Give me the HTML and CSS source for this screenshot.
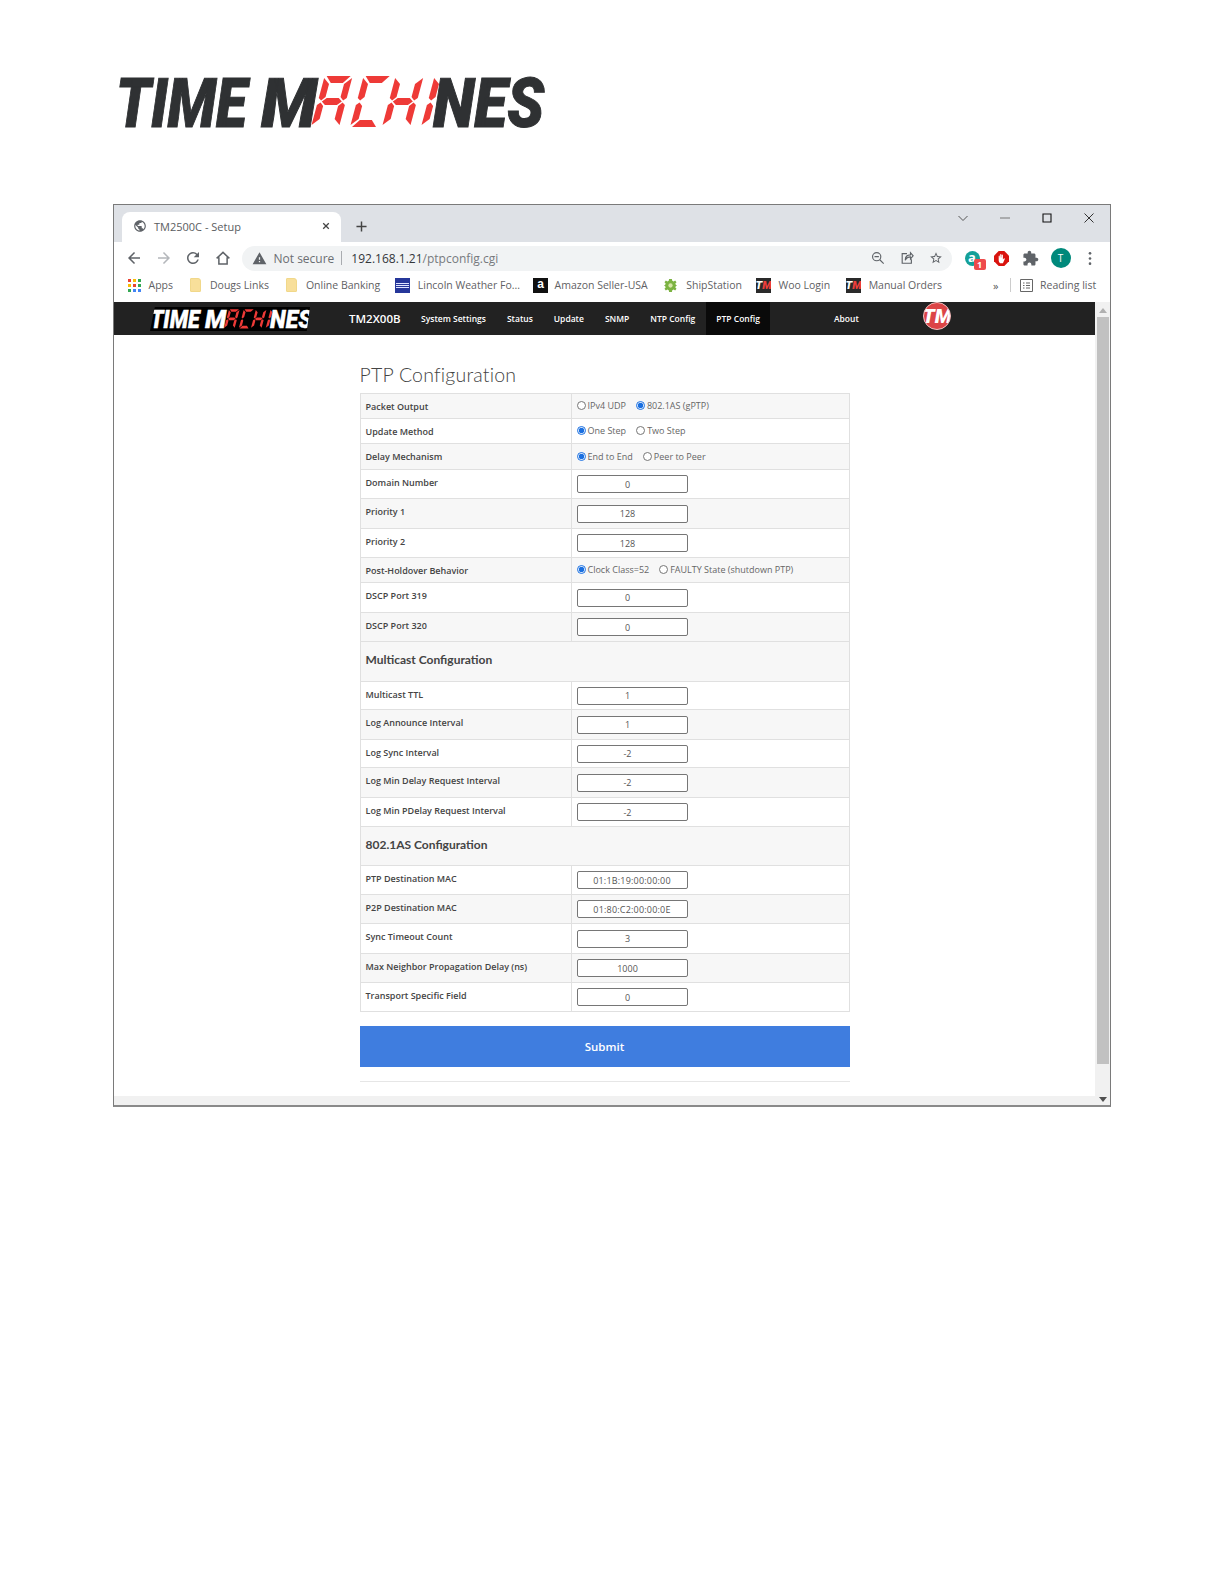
FILE: index.html
```html
<!DOCTYPE html>
<html lang="en">
<head>
<meta charset="utf-8">
<title>Time Machines - PTP Configuration</title>
<link rel="stylesheet" href="styles.css">
</head>
<body>
<svg class="defs" width="0" height="0" aria-hidden="true">
  <defs>
    <polygon id="s-top" points="2,-51 26,-51 20,-44 8,-44"/>
    <polygon id="s-ul" points="0,-49 6.5,-43 6.5,-30 3,-26.500 0,-29"/>
    <polygon id="s-ur" points="28,-49 21.5,-43 21.5,-30 25,-26.500 28,-29"/>
    <polygon id="s-mid" points="4,-25.500 8,-29 20,-29 24,-25.500 20,-22 8,-22"/>
    <polygon id="s-ll" points="0,-22 3,-24.500 6.5,-21 6.5,-8 0,-2"/>
    <polygon id="s-lr" points="28,-22 25,-24.500 21.5,-21 21.5,-8 28,-2"/>
    <polygon id="s-bot" points="2,0 8,-7 20,-7 26,0"/>
    <symbol id="tm-logo" viewBox="113 72 436 60">
      <text class="logo-word" x="116" y="127" textLength="131" lengthAdjust="spacingAndGlyphs">TIME</text>
      <text class="logo-word" x="261" y="127" textLength="56" lengthAdjust="spacingAndGlyphs">M</text>
      <text class="logo-word" x="433" y="127" textLength="111" lengthAdjust="spacingAndGlyphs">NES</text>
      <g class="logo-seg">
        <g transform="translate(311 127) skewX(-15)">
          <use href="#s-top"/><use href="#s-ul"/><use href="#s-ur"/><use href="#s-mid"/><use href="#s-ll"/><use href="#s-lr"/>
        </g>
        <g transform="translate(350 127) skewX(-15)">
          <use href="#s-top"/><use href="#s-ul"/><use href="#s-ll"/><use href="#s-bot"/>
        </g>
        <g transform="translate(382 127) skewX(-15)">
          <use href="#s-ul"/><use href="#s-ur"/><use href="#s-mid"/><use href="#s-ll"/><use href="#s-lr"/>
        </g>
        <g transform="translate(421 127) skewX(-15)">
          <use href="#s-ul"/><use href="#s-ll"/>
        </g>
      </g>
    </symbol>
  </defs>
</svg>

<header class="brand">
  <svg class="brand-logo" role="img" aria-label="Time Machines"><use href="#tm-logo"/></svg>
</header>

<div class="window">
  <div class="tabstrip">
    <div class="tab">
      <svg class="globe" viewBox="0 0 24 24"><path d="M12 2C6.48 2 2 6.48 2 12s4.48 10 10 10 10-4.48 10-10S17.52 2 12 2zm-1 17.93c-3.95-.49-7-3.85-7-7.93 0-.62.08-1.21.21-1.79L9 15v1c0 1.1.9 2 2 2v1.93zm6.9-2.54c-.26-.81-1-1.39-1.9-1.39h-1v-3c0-.55-.45-1-1-1H8v-2h2c.55 0 1-.45 1-1V7h2c1.1 0 2-.9 2-2v-.41c2.93 1.19 5 4.06 5 7.41 0 2.08-.8 3.97-2.1 5.39z"/></svg>
      <span class="tab-title">TM2500C - Setup</span>
      <svg class="tab-x" viewBox="0 0 10 10"><path d="M1.5 1.5l7 7M8.5 1.5l-7 7"/></svg>
    </div>
    <svg class="tab-plus" viewBox="0 0 12 12"><path d="M6 .5v11M.5 6h11"/></svg>
    <div class="winctl">
      <svg class="wc wc-chev" viewBox="0 0 12 12"><path d="M1.500 4l4.500 4.500L10.500 4"/></svg>
      <svg class="wc wc-min" viewBox="0 0 12 12"><path d="M1 6h10"/></svg>
      <svg class="wc wc-max" viewBox="0 0 12 12"><path d="M2 2h8v8H2z"/></svg>
      <svg class="wc wc-close" viewBox="0 0 12 12"><path d="M1.5 1.5l9 9M10.5 1.5l-9 9"/></svg>
    </div>
  </div>

  <div class="toolbar">
    <svg class="nav-ic" viewBox="0 0 24 24"><path d="M20 11H7.83l5.59-5.59L12 4l-8 8 8 8 1.41-1.41L7.83 13H20v-2z"/></svg>
    <svg class="nav-ic nav-off" viewBox="0 0 24 24"><path d="M12 4l-1.41 1.41L16.17 11H4v2h12.17l-5.58 5.59L12 20l8-8z"/></svg>
    <svg class="nav-ic" viewBox="0 0 24 24"><path d="M17.65 6.35A7.958 7.958 0 0012 4c-4.42 0-7.99 3.58-7.99 8s3.57 8 7.99 8c3.73 0 6.84-2.55 7.73-6h-2.08A5.99 5.99 0 0112 18c-3.31 0-6-2.69-6-6s2.69-6 6-6c1.66 0 3.14.69 4.22 1.78L13 11h7V4l-2.35 2.35z"/></svg>
    <svg class="nav-ic home" viewBox="0 0 24 24"><path d="M3.5 12.5L12 4.5l8.5 8M6.5 11v9h11v-9"/></svg>
    <div class="omnibox">
      <svg class="warn" viewBox="0 0 24 24"><path d="M1 21h22L12 2 1 21zm12-3h-2v-2h2v2zm0-4h-2v-4h2v4z"/></svg>
      <span class="not-secure">Not secure</span>
      <span class="omni-sep"></span>
      <span class="url">192.168.1.21<span class="url-path">/ptpconfig.cgi</span></span>
      <span class="omni-right">
        <svg class="omni-ic" viewBox="0 0 16 16"><circle cx="6.5" cy="6.5" r="4.7"/><path d="M10 10l4.5 4.5M4 6.5h5"/></svg>
        <svg class="omni-ic" viewBox="0 0 16 16"><path d="M8 3H2.5v11h10.5V9.5M6 10.5c0-4 2.500-6 6-6V2l3 3.500-3 3.500V6.700c-2.800 0-4.800 1.300-6 3.800z"/></svg>
        <svg class="omni-ic omni-star" viewBox="0 0 24 24"><path d="M22 9.240l-7.190-.62L12 2 9.190 8.630 2 9.240l5.460 4.730L5.820 21 12 17.270 18.180 21l-1.630-7.030L22 9.240zM12 15.400l-3.760 2.270 1-4.280-3.320-2.880 4.380-.38L12 6.100l1.710 4.040 4.380.38-3.320 2.880 1 4.280L12 15.400z"/></svg>
      </span>
    </div>
    <div class="exts">
      <span class="ext-a">a<span class="ext-badge">1</span></span>
      <svg class="ext-stop" viewBox="0 0 16 16"><path class="stop-bg" d="M5 0h6l5 5v6l-5 5H5l-5-5V5z"/><path class="stop-hand" d="M5 5.500c0-1 1.200-1 1.200 0V7h.4V4c0-1 1.300-1 1.300 0v3h.3V4.500c0-1 1.300-1 1.300 0V9l.9-1c.7-.6 1.500.1 1 .8L9.500 13H6.500C5.500 12 5 11 5 10z"/></svg>
      <svg class="ext-puzzle" viewBox="0 0 24 24"><path d="M20.500 11H19V7c0-1.100-.9-2-2-2h-4V3.500C13 2.120 11.880 1 10.500 1S8 2.120 8 3.500V5H4c-1.100 0-1.990.9-1.990 2v3.800H3.500c1.490 0 2.700 1.210 2.700 2.700s-1.210 2.700-2.700 2.700H2V20c0 1.100.9 2 2 2h3.800v-1.500c0-1.490 1.210-2.700 2.700-2.700 1.490 0 2.700 1.210 2.700 2.700V22H17c1.100 0 2-.9 2-2v-4h1.500c1.380 0 2.500-1.120 2.500-2.500S21.880 11 20.500 11z"/></svg>
      <span class="avatar">T</span>
      <svg class="kebab" viewBox="0 0 4 16"><circle cx="2" cy="2.500" r="1.400"/><circle cx="2" cy="8" r="1.400"/><circle cx="2" cy="13.500" r="1.400"/></svg>
    </div>
  </div>

  <div class="bookmarks">
    <span class="bm">
      <svg class="bm-ic" viewBox="0 0 13 13"><g class="d-r"><rect width="3" height="3"/><rect x="5" y="5" width="3" height="3"/></g><g class="d-y"><rect x="5" width="3" height="3"/><rect y="5" width="3" height="3"/></g><g class="d-g"><rect x="10" width="3" height="3"/><rect x="10" y="5" width="3" height="3"/><rect y="10" width="3" height="3"/></g><g class="d-b"><rect x="5" y="10" width="3" height="3"/><rect x="10" y="10" width="3" height="3"/></g></svg>
      Apps
    </span>
    <span class="bm"><span class="folder"></span>Dougs Links</span>
    <span class="bm"><span class="folder"></span>Online Banking</span>
    <span class="bm"><span class="wx"><i></i><i></i><i></i></span>Lincoln Weather Fo...</span>
    <span class="bm"><span class="amz">a</span>Amazon Seller-USA</span>
    <span class="bm">
      <svg class="bm-ic gear-ic" viewBox="0 0 14 14"><path class="gear" d="M5.500 0h3l.4 2 1.500.6L12 1.500 13.500 3.500l-1.300 1.300.5 1.500L14 7l-1.300.7-.5 1.500 1.300 1.300L12 12.500l-1.600-1.100-1.500.6-.4 2h-3l-.4-2-1.500-.6L2 12.500.5 10.500l1.300-1.300-.5-1.500L0 7l1.300-.7.5-1.500L.5 3.500 2 1.500l1.600 1.100L5.100 2z"/><circle class="gear-eye" cx="7" cy="7" r="2.300"/></svg>
      ShipStation
    </span>
    <span class="bm"><span class="tmfav tmfav-first"><b>T</b><em>M</em></span>Woo Login</span>
    <span class="bm"><span class="tmfav"><b>T</b><em>M</em></span>Manual Orders</span>
    <span class="bm-more">»</span>
    <span class="bm-sep"></span>
    <span class="bm bm-read">
      <svg class="bm-ic read-ic" viewBox="0 0 13 13"><path d="M.5.500h12v12H.5zM3 4h1.500M6 4h4M3 6.500h1.500M6 6.500h4M3 9h1.500M6 9h4"/></svg>
      Reading list
    </span>
  </div>

  <div class="viewport">
    <div class="site">
      <nav class="topnav">
        <span class="nav-logo"><svg role="img" aria-label="Time Machines"><use href="#tm-logo"/></svg></span>
        <a class="nav-model">TM2X00B</a>
        <a class="nav-link">System Settings</a>
        <a class="nav-link">Status</a>
        <a class="nav-link">Update</a>
        <a class="nav-link">SNMP</a>
        <a class="nav-link">NTP Config</a>
        <a class="nav-link nav-active">PTP Config</a>
        <a class="nav-link nav-about">About</a>
        <span class="nav-badge"><b>T</b><em>M</em></span>
      </nav>

      <main class="content">
        <h1>PTP Configuration</h1>
        <form class="cfg">
          <table>
            <tr class="alt h25"><th>Packet Output</th><td class="opts"><label><input type="radio" name="a">IPv4 UDP</label><label><input type="radio" name="a" checked>802.1AS (gPTP)</label></td></tr>
            <tr class="h25"><th class="mid">Update Method</th><td class="opts"><label><input type="radio" name="b" checked>One Step</label><label><input type="radio" name="b">Two Step</label></td></tr>
            <tr class="alt h26"><th class="mid">Delay Mechanism</th><td class="opts"><label><input type="radio" name="c" checked>End to End</label><label><input type="radio" name="c">Peer to Peer</label></td></tr>
            <tr class="h29"><th>Domain Number</th><td><input class="field" value="0"></td></tr>
            <tr class="alt h30"><th>Priority 1</th><td><input class="field" value="128"></td></tr>
            <tr class="h29"><th>Priority 2</th><td><input class="field" value="128"></td></tr>
            <tr class="alt h25"><th class="mid">Post-Holdover Behavior</th><td class="opts"><label><input type="radio" name="d" checked>Clock Class=52</label><label><input type="radio" name="d">FAULTY State (shutdown PTP)</label></td></tr>
            <tr class="h30"><th>DSCP Port 319</th><td><input class="field" value="0"></td></tr>
            <tr class="alt h29"><th>DSCP Port 320</th><td><input class="field" value="0"></td></tr>
            <tr class="alt h40 section"><th colspan="2">Multicast Configuration</th></tr>
            <tr class="h28"><th>Multicast TTL</th><td><input class="field" value="1"></td></tr>
            <tr class="alt h30"><th>Log Announce Interval</th><td><input class="field" value="1"></td></tr>
            <tr class="h28"><th>Log Sync Interval</th><td><input class="field" value="-2"></td></tr>
            <tr class="alt h30"><th>Log Min Delay Request Interval</th><td><input class="field" value="-2"></td></tr>
            <tr class="h29"><th>Log Min PDelay Request Interval</th><td><input class="field" value="-2"></td></tr>
            <tr class="alt h39 section"><th colspan="2">802.1AS Configuration</th></tr>
            <tr class="h29"><th>PTP Destination MAC</th><td><input class="field field-mac" value="01:1B:19:00:00:00"></td></tr>
            <tr class="alt h29"><th>P2P Destination MAC</th><td><input class="field field-mac" value="01:80:C2:00:00:0E"></td></tr>
            <tr class="h30"><th>Sync Timeout Count</th><td><input class="field" value="3"></td></tr>
            <tr class="alt h29"><th>Max Neighbor Propagation Delay (ns)</th><td><input class="field" value="1000"></td></tr>
            <tr class="h29"><th>Transport Specific Field</th><td><input class="field" value="0"></td></tr>
          </table>
          <button type="button" class="submit">Submit</button>
        </form>
        <hr>
      </main>
      <div class="hbar"></div>
    </div>
    <div class="scrollbar">
      <span class="arrow-up"></span>
      <span class="thumb"></span>
      <span class="arrow-down"></span>
    </div>
  </div>
</div>
</body>
</html>
```

FILE: styles.css
```css
* { box-sizing: border-box; }
html, body { margin: 0; padding: 0; background: #fff; }
body { font-family: "Open Sans", "Liberation Sans", sans-serif; color: #333; height: 1584px; overflow: hidden; }
.defs { position: absolute; }

.brand { height: 204px; padding: 72px 0 0 113px; }
.brand-logo { display: block; width: 436px; height: 60px; color: #2f3133; }
.logo-word { font-family: Roboto, "Liberation Sans", sans-serif; font-weight: 900; font-style: italic; font-size: 69px; fill: currentColor; stroke: currentColor; stroke-width: 1px; }
.logo-seg { fill: #ee3a37; }

.window { margin-left: 113px; width: 998px; height: 903px; border: 1px solid #7a7a7a; border-bottom-width: 2px; border-bottom-color: #8a8a8a; overflow: hidden; background: #fff; }

.tabstrip { height: 37px; background: #dee1e6; display: flex; align-items: flex-end; padding-left: 8px; position: relative; }
.tab { width: 219px; height: 30px; background: #fff; border-radius: 8px 8px 0 0; display: flex; align-items: center; padding: 0 0 2px 11px; }
.globe { width: 14px; height: 14px; fill: #5f6368; flex: none; }
.tab-title { font-size: 11px; color: #5a5d61; margin-left: 7px; flex: 1; }
.tab-x { width: 8px; height: 8px; stroke: #444; stroke-width: 1.6; fill: none; margin-right: 11px; }
.tab-plus { width: 11px; height: 11px; stroke: #444; stroke-width: 1.6; fill: none; margin: 0 0 10px 15px; }
.winctl { position: absolute; top: 7px; right: 15px; display: flex; gap: 30px; }
.wc { width: 12px; height: 12px; fill: none; stroke: #333; stroke-width: 1; display: block; }
.wc-chev { stroke: #555; }
.wc-min { stroke: #777; }
.wc-max { stroke: #111; stroke-width: 1.1; }

.toolbar { height: 30px; background: #fff; display: flex; align-items: center; padding-left: 11px; padding-top: 2px; }
.nav-ic { width: 18px; height: 18px; fill: #5f6368; flex: none; margin-right: 11.500px; }
.nav-off { fill: #b4b7bb; }
.home { fill: none; stroke: #5f6368; stroke-width: 2; margin-right: 4px; }
.omnibox { width: 710px; height: 25px; border-radius: 13px; background: #f1f3f4; display: flex; align-items: center; padding-left: 10px; margin-left: 6px; flex: none; }
.warn { width: 15px; height: 15px; fill: #5f6368; flex: none; }
.not-secure { font-size: 12px; color: #6b6e72; margin-left: 7px; }
.omni-sep { width: 1px; height: 14px; background: #a9acb0; margin: 0 9px 0 7px; }
.url { font-size: 12px; color: #33363a; }
.url-path { color: #777a7e; }
.omni-right { margin-left: auto; display: flex; align-items: center; gap: 15px; padding-right: 9px; }
.omni-ic { width: 14px; height: 14px; fill: none; stroke: #5f6368; stroke-width: 1.300; display: block; }
.omni-star { fill: #5f6368; stroke: none; }

.exts { display: flex; align-items: center; margin-left: 13px; }
.ext-a { position: relative; width: 15px; height: 15px; border-radius: 50%; background: #14a098; color: #fff; font-size: 13px; font-weight: 700; line-height: 13px; text-align: center; }
.ext-badge { position: absolute; left: 9px; top: 8px; width: 12px; height: 11px; background: #ee4b4b; border-radius: 2px; color: #fff; font-size: 9px; line-height: 11px; }
.ext-stop { width: 15px; height: 15px; margin-left: 14px; }
.stop-bg { fill: #d9140f; }
.stop-hand { fill: #fff; }
.ext-puzzle { width: 17px; height: 17px; fill: #5f6368; margin-left: 13px; }
.avatar { width: 20px; height: 20px; border-radius: 50%; background: #00897b; color: #fff; font-size: 10px; line-height: 20px; text-align: center; margin-left: 12px; }
.kebab { width: 4px; height: 15px; fill: #5f6368; margin-left: 17px; }

.bookmarks { height: 30px; background: #fff; display: flex; align-items: center; padding: 0 0 4px 14px; font-size: 10.500px; color: #5f6164; gap: 16px; }
.bm { display: flex; align-items: center; gap: 7.500px; white-space: nowrap; }
.bm-ic { width: 13px; height: 13px; flex: none; }
.gear-ic { margin-right: 2px; }
.d-r { fill: #ea4335; }
.d-y { fill: #fbbc04; }
.d-g { fill: #34a853; }
.d-b { fill: #4285f4; }
.folder { width: 11px; height: 14px; margin: 0 1.500px 0 1px; background: #f8df9a; border: 1px solid #f1d88a; border-radius: 1px 3px 1px 1px; flex: none; }
.wx { width: 15px; height: 15px; margin-left: -1px; background: #26379a; flex: none; display: flex; flex-direction: column; justify-content: center; gap: 1px; padding: 0 1px; }
.wx i { display: block; height: 1px; background: #dfe5ff; }
.amz { width: 15px; height: 15px; margin: 0 -1px 0 -3px; background: #111; color: #fff; font: 700 12px/13px "Liberation Sans", sans-serif; text-align: center; flex: none; }
.gear { fill: #7cb342; }
.gear-eye { fill: #d7e6a8; }
.tmfav { width: 15px; height: 15px; background: #2a2a2a; color: #fff; font: italic 900 11px/15px Roboto, sans-serif; flex: none; display: flex; justify-content: center; overflow: hidden; }
.tmfav-first { margin-left: -2px; }
.tmfav b { font-weight: 900; }
.tmfav em { color: #ef3e3b; }
.bm-more { margin-left: 35px; font-size: 11px; color: #555; }
.bm-sep { width: 1px; height: 14px; background: #ccc; margin-left: -5px; }
.bm-read { margin-left: -7px; }
.read-ic { fill: none; stroke: #666; stroke-width: 1; }

.viewport { display: flex; height: 804px; }
.site { width: 981px; display: flex; flex-direction: column; position: relative; }
.topnav { height: 33px; background: #222; display: flex; align-items: stretch; color: #fff; flex: none; position: relative; }
.nav-logo { width: 160px; height: 24px; background: #000; margin: 5px 0 0 36px; clip-path: polygon(3% 0, 100% 0, 98% 100%, 0 100%); display: block; color: #fff; }
.nav-logo svg { display: block; width: 165px; height: 24px; margin-left: -1px; }
.topnav a { display: flex; align-items: center; white-space: nowrap; }
.nav-model { font-size: 11.500px; font-weight: 600; margin-left: 39px; }
.nav-link { font-size: 8.500px; font-weight: 600; padding: 0 10.500px; }
.nav-model + .nav-link { margin-left: 10px; }
.nav-active { background: #0a0a0a; }
.nav-about { margin-left: 53px; }
.nav-badge { position: absolute; left: 809px; top: 0; width: 28px; height: 28px; border-radius: 50%; background: #dc4446; border: 1px solid #f2c3c3; color: #fff; font: italic 900 20px/26px Roboto, sans-serif; display: flex; justify-content: center; overflow: hidden; }
.nav-badge b { font-weight: 900; }

.content { width: 490px; margin: 0 auto; flex: 1; }
h1 { margin: 0; height: 58px; padding-top: 26px; font: 300 19.500px/28px Lato, "Open Sans", sans-serif; color: #444; letter-spacing: .2px; }
table { width: 490px; border-collapse: collapse; table-layout: fixed; }
th, td { border: 1px solid #e0e0e0; font-size: 9px; padding: 0; }
tr.alt { background: #f7f7f7; }
th { width: 211px; text-align: left; font-weight: 600; color: #444; padding: 5.500px 0 0 5px; vertical-align: top; white-space: nowrap; }
th.mid { padding-top: 0; vertical-align: middle; }
tr.h25 th { padding-top: 0; vertical-align: middle; }
td { padding-left: 5px; color: #666; vertical-align: middle; }
.h25 { height: 25px; }
.h26 { height: 26px; }
.h28 { height: 28px; }
.h29 { height: 29px; }
.h30 { height: 30px; }
.h39 { height: 39px; }
.h40 { height: 40px; }
tr.section th { font: 700 12px Lato, "Open Sans", sans-serif; color: #444; vertical-align: middle; padding: 0 0 4px 5px; }
.opts { white-space: nowrap; }
.opts label { display: inline-flex; align-items: center; margin-right: 10px; }
.opts input { width: 9px; height: 9px; margin: 0 2px 0 0; accent-color: #1a6fe0; }
.field { display: block; width: 111px; height: 18px; border: 1px solid #767676; border-radius: 2px; background: #fff; font: 9px "Open Sans", sans-serif; color: #555; text-align: center; padding: 0 9px 0 0; }
.field-mac { padding: 0; letter-spacing: .2px; }
.submit { display: block; width: 490px; height: 41px; margin-top: 14px; border: 0; background: #3f7ddf; color: #fff; font: 600 11.500px "Open Sans", sans-serif; }
hr { border: 0; border-top: 1px solid #e6e6e6; margin: 14px 0 0; }
.hbar { height: 10px; background: #f1f1f1; flex: none; }

.scrollbar { flex: 1; background: #f1f1f1; position: relative; display: flex; flex-direction: column; align-items: center; }
.thumb { width: 12px; height: 747px; background: #c1c1c1; margin-top: 15px; flex: none; }
.arrow-up, .arrow-down { position: absolute; left: 4px; width: 0; height: 0; border-left: 4px solid transparent; border-right: 4px solid transparent; }
.arrow-up { top: 6px; border-bottom: 5px solid #b0b0b0; }
.arrow-down { bottom: 4px; border-top: 5px solid #505050; }
```
